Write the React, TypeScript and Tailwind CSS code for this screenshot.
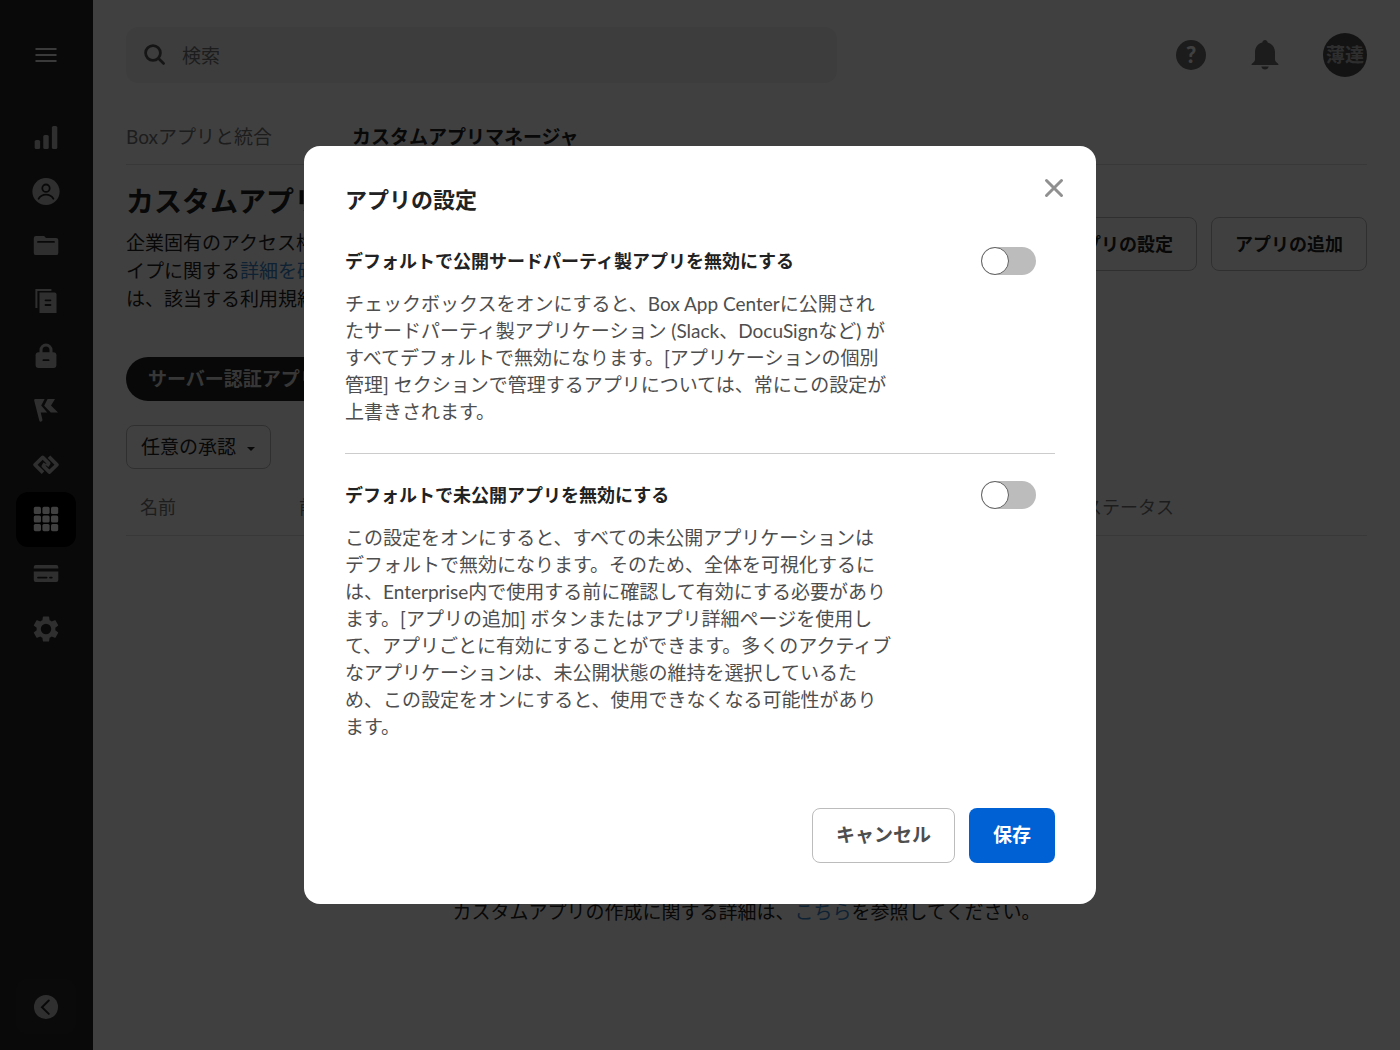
import React from "react";

const iconBox = "h-[30px] w-[30px]";

function ChartIcon() {
  return (
    <svg viewBox="0 0 30 30" className={iconBox} fill="currentColor" aria-hidden="true">
      <rect x="3.7" y="18" width="5.4" height="9" rx="1.6" />
      <rect x="12.3" y="13" width="5.4" height="14" rx="1.6" />
      <rect x="20.9" y="4" width="5.4" height="23" rx="1.6" />
    </svg>
  );
}

function UserIcon() {
  return (
    <svg viewBox="0 0 30 30" className={iconBox} aria-hidden="true">
      <circle cx="15" cy="14.500" r="13.600" fill="currentColor" />
      <circle cx="15" cy="11.200" r="3.700" fill="none" stroke="#222" strokeWidth="1.800" />
      <path d="M7.600 21.800c1.600-2.800 4.300-4.200 7.400-4.200s5.800 1.400 7.400 4.200" fill="none" stroke="#222" strokeWidth="1.800" strokeLinecap="round" />
    </svg>
  );
}

function FolderIcon() {
  return (
    <svg viewBox="0 0 30 30" className={iconBox} aria-hidden="true">
      <path d="M2.800 7.300a2.200 2.200 0 0 1 2.200-2.200h7.200c.9 0 1.300.4 1.900 1l.8.8h10.200a2.200 2.200 0 0 1 2.200 2.200v12.800a2.200 2.200 0 0 1-2.200 2.200H5a2.200 2.200 0 0 1-2.200-2.200z" fill="currentColor" />
      <path d="M7 10.900h16" stroke="#222" strokeWidth="1.800" strokeLinecap="round" />
    </svg>
  );
}

function DocsIcon() {
  return (
    <svg viewBox="0 0 30 30" className={iconBox} aria-hidden="true">
      <path d="M5.400 22V3.900h15" fill="none" stroke="currentColor" strokeWidth="2" />
      <path d="M8.500 6.500h15a2 2 0 0 1 2 2V27h-17z" fill="currentColor" />
      <path d="M14.500 14.300h5M14.500 19h5" stroke="#222" strokeWidth="1.800" strokeLinecap="round" />
    </svg>
  );
}

function LockIcon() {
  return (
    <svg viewBox="0 0 30 30" className={iconBox} aria-hidden="true">
      <path d="M10 13V9a5 5 0 0 1 10 0v4" fill="none" stroke="currentColor" strokeWidth="3" />
      <rect x="4.600" y="11.200" width="20.800" height="15.800" rx="3" fill="currentColor" />
      <path d="M12.400 19.200h5.200" stroke="#222" strokeWidth="1.800" strokeLinecap="round" />
    </svg>
  );
}

function FlagIcon() {
  return (
    <svg viewBox="0 0 30 30" className={iconBox} fill="currentColor" aria-hidden="true">
      <path d="M4.200 4h9.400l-3.400 6.600 6 7H9.700l1.700 7a1.600 1.600 0 0 1-3.100.800L3.200 5.400A1.100 1.100 0 0 1 4.200 4z" />
      <path d="M16.600 4h7.400l-4 6.400 7 7.200h-7.200l-6.600-6.800z" />
    </svg>
  );
}

function IntegrationIcon() {
  return (
    <svg viewBox="0 0 30 30" className={iconBox} fill="none" stroke="currentColor" strokeWidth="3.600" strokeLinejoin="round" aria-hidden="true">
      <path d="M12 22.600 4 14.700l7.700-7.400 6 6-1.700 2.700" />
      <path d="m18 6.800 8 7.900-7.700 7.400-6-6 1.700-2.700" />
    </svg>
  );
}

function AppsIcon() {
  return (
    <svg viewBox="0 0 30 30" className={iconBox} fill="currentColor" aria-hidden="true">
      {[2.8, 11.4, 20].map((y) =>
        [2.8, 11.4, 20].map((x) => <rect key={`${x}-${y}`} x={x} y={y} width="7.200" height="7.200" rx="1.600" />)
      )}
    </svg>
  );
}

function CardIcon() {
  return (
    <svg viewBox="0 0 30 30" className={iconBox} aria-hidden="true">
      <path d="M2.800 9.600V8a2 2 0 0 1 2-2h20.500a2 2 0 0 1 2 2v1.600zM2.800 12.600h24.500V21a2 2 0 0 1-2 2H4.800a2 2 0 0 1-2-2z" fill="currentColor" />
      <path d="M7 18.600h8.600M19 18.600h1.800" stroke="#222" strokeWidth="1.800" strokeLinecap="round" />
    </svg>
  );
}

function GearIcon() {
  return (
    <svg viewBox="0 0 24 24" className={iconBox} fill="currentColor" aria-hidden="true">
      <path d="M19.430 12.980c.04-.32.07-.64.07-.98s-.03-.66-.07-.98l2.110-1.650c.19-.15.24-.42.12-.64l-2-3.460c-.12-.22-.39-.3-.61-.22l-2.490 1c-.52-.4-1.080-.73-1.690-.98l-.38-2.650A.488.488 0 0 0 14 2h-4c-.25 0-.46.18-.49.42l-.38 2.650c-.61.25-1.170.59-1.690.98l-2.490-1c-.23-.09-.49 0-.61.22l-2 3.460c-.13.22-.07.49.12.64l2.110 1.650c-.04.32-.07.65-.07.98s.03.66.07.98l-2.110 1.650c-.19.15-.24.42-.12.64l2 3.460c.12.22.39.3.61.22l2.490-1c.52.4 1.080.73 1.690.98l.38 2.650c.03.24.24.42.49.42h4c.25 0 .46-.18.49-.42l.38-2.650c.61-.25 1.170-.59 1.690-.98l2.490 1c.23.09.49 0 .61-.22l2-3.460c.12-.22.07-.49-.12-.64zM12 16.200a4.200 4.200 0 1 1 0-8.400 4.200 4.200 0 0 1 0 8.400z" />
    </svg>
  );
}

const navItems = [
  { label: "インサイト", icon: <ChartIcon /> },
  { label: "ユーザーとグループ", icon: <UserIcon /> },
  { label: "コンテンツ", icon: <FolderIcon /> },
  { label: "レポート", icon: <DocsIcon /> },
  { label: "セキュリティ", icon: <LockIcon /> },
  { label: "ガバナンス", icon: <FlagIcon /> },
  { label: "自動化", icon: <IntegrationIcon /> },
  { label: "アプリ", icon: <AppsIcon />, active: true },
  { label: "請求", icon: <CardIcon /> },
  { label: "設定", icon: <GearIcon /> },
];

function Sidebar() {
  return (
    <aside className="flex w-[93px] shrink-0 flex-col items-center bg-[#262626] pb-4 pr-px pt-7 text-[#bcbcbc]">
      <button type="button" aria-label="メニュー" className="flex h-[54px] w-[60px] items-center justify-center text-[#e8e8e8]">
        <svg viewBox="0 0 22 16" className="h-4 w-[22px]" aria-hidden="true">
          <path d="M0.500 2h21M0.500 8h21M0.500 14h21" stroke="currentColor" strokeWidth="2" />
        </svg>
      </button>
      <nav className="mt-7 flex h-[546px] flex-col">
        {navItems.map((item) => (
          <a
            key={item.label}
            href="#"
            aria-label={item.label}
            aria-current={item.active ? "page" : undefined}
            className={
              item.active
                ? "flex h-[55px] w-[60px] items-center justify-center rounded-xl bg-black text-white"
                : "flex h-[55px] w-[60px] items-center justify-center rounded-xl"
            }
          >
            {item.icon}
          </a>
        ))}
      </nav>
      <button type="button" aria-label="折りたたむ" className="mt-auto flex h-[55px] w-[60px] items-center justify-center rounded-xl bg-[#2b2b2b]">
        <svg viewBox="0 0 24 24" className="h-6 w-6" aria-hidden="true">
          <circle cx="12" cy="12" r="12" fill="currentColor" />
          <path d="m14.800 5.500-6.800 6.700 6.800 6.700" fill="none" stroke="#222" strokeWidth="2" strokeLinecap="round" />
        </svg>
      </button>
    </aside>
  );
}

function Header() {
  return (
    <header className="flex h-14 items-center justify-between">
      <label className="flex h-14 w-full max-w-[711px] items-center gap-4 rounded-xl bg-[#f4f4f4] pl-[18px] pr-4 text-[#555]">
        <svg viewBox="0 0 22 22" className="h-[22px] w-[22px] shrink-0" fill="none" stroke="currentColor" strokeWidth="2.800" strokeLinecap="round" aria-hidden="true">
          <circle cx="9" cy="9" r="7.400" />
          <path d="m14.800 14.800 4.800 4.600" />
        </svg>
        <input type="search" aria-label="検索" placeholder="検索" className="w-full bg-transparent pt-0.5 text-[19px] outline-none placeholder:text-[#767676]" />
      </label>
      <div className="flex items-center text-[#6f6f6f]">
        <button type="button" aria-label="ヘルプ" className="flex h-[30px] w-[30px] items-center justify-center rounded-full bg-[#6f6f6f] text-[22px] font-black leading-none text-white">
          ?
        </button>
        <button type="button" aria-label="通知" className="ml-[43px]">
          <svg viewBox="0 0 32 32" className="h-8 w-8" fill="currentColor" aria-hidden="true">
            <path d="M13.300 3.500C13.500 2 14.600 1 16 1s2.500 1 2.700 2.500C23.300 4.700 26 8.400 26 13v7.200c0 1.600.8 2.700 2 3.500.9.600 1.500 1.300 1.500 2.300H2.500c0-1 .6-1.700 1.500-2.300 1.200-.8 2-1.900 2-3.500V13c0-4.600 2.700-8.300 7.300-9.500zM12.300 27.600h7.400a3.800 3.800 0 0 1-7.400 0z" />
          </svg>
        </button>
        <button type="button" className="ml-[42px] h-11 w-11 whitespace-nowrap rounded-full bg-[#4e4e4e] text-center text-[19px] font-bold text-[#b8b8b8]">
          <span className="flex justify-center">薄達</span>
        </button>
      </div>
    </header>
  );
}

function AppManager() {
  return (
    <main className="flex min-w-0 flex-1 flex-col px-[33px] pt-[27px]">
      <Header />
      <nav className="mt-7 flex h-[54px] gap-20 border-b border-[#e0e0e0] pt-3 text-[19px] leading-7">
        <a href="#" className="text-[#767676]">Boxアプリと統合</a>
        <a href="#" aria-current="page" className="font-bold text-[#222]">カスタムアプリマネージャ</a>
      </nav>
      <section className="mt-4 flex items-start justify-between">
        <div className="w-[640px]">
          <h1 className="text-[28px] font-bold leading-10 text-[#222]">カスタムアプリマネージャ</h1>
          <p className="mt-2 text-[19px] leading-7 text-[#222]">
            企業固有のアクセス権限を持つアプリを管理します。アプリタ
            <br />
            イプに関する<a href="#" className="text-[#3c86cc]">詳細を確認</a>してください。アプリの使用に際して
            <br />
            は、該当する利用規約が適用されます。
          </p>
        </div>
        <div className="mt-9 flex gap-[14px] text-[18px] font-bold text-[#222]">
          <button type="button" className="h-[54px] rounded-lg border border-[#bcbcbc] px-[23px]">アプリの設定</button>
          <button type="button" className="h-[54px] rounded-lg border border-[#bcbcbc] px-[23px]">アプリの追加</button>
        </div>
      </section>
      <button type="button" className="mt-[44px] h-11 self-start rounded-full bg-[#222] px-[22px] text-[19px] font-bold text-[#dcdcdc]">
        サーバー認証アプリ
      </button>
      <div className="relative mt-6 w-[145px] text-[#222]">
        <select aria-label="承認" className="h-[44px] w-full appearance-none rounded-lg border border-[#bcbcbc] bg-transparent pl-[14px] text-[19px]">
          <option>任意の承認</option>
        </select>
        <svg viewBox="0 0 8 4" className="pointer-events-none absolute right-4 top-[22px] h-1 w-2" fill="currentColor" aria-hidden="true">
          <path d="M0 0h8L4 4z" />
        </svg>
      </div>
      <table className="mt-[11px] w-full table-fixed border-b border-[#e0e0e0] text-left text-[18px] text-[#767676]">
        <thead>
          <tr className="h-[55px]">
            <th scope="col" className="w-[159px] pl-[14px] font-normal">名前</th>
            <th scope="col" className="pl-[14px] font-normal">前回の更新</th>
            <th scope="col" className="w-[283px] font-normal">ステータス</th>
          </tr>
        </thead>
      </table>
      <p className="mt-auto pb-[124px] text-center text-[19px] leading-7 text-[#222]">
        カスタムアプリの作成に関する詳細は、<a href="#" className="text-[#3c86cc]">こちら</a>を参照してください。
      </p>
    </main>
  );
}

type SettingProps = { id: string; title: string; lines: string[] };

function Setting({ id, title, lines }: SettingProps) {
  return (
    <section>
      <div className="flex h-7 items-center justify-between pr-[19px]">
        <label htmlFor={id} className="text-[18px] font-bold text-[#222]">{title}</label>
        <span className="relative flex h-7 w-[55px]">
          <input id={id} type="checkbox" role="switch" aria-describedby={`${id}-text`} className="peer h-7 w-[55px] appearance-none rounded-full bg-[#bcbcbc] checked:bg-[#0061d5]" />
          <span className="pointer-events-none absolute left-0 top-0 h-7 w-7 rounded-full border border-[#606060] bg-white peer-checked:left-[27px]" />
        </span>
      </div>
      <p id={`${id}-text`} className="mt-[15px] text-[19px] leading-[27px] text-[#4e4e4e]">
        {lines.map((line) => (
          <span key={line} className="block">{line}</span>
        ))}
      </p>
    </section>
  );
}

function SettingsDialog() {
  return (
    <div className="fixed inset-0 flex items-center justify-center bg-black/75">
      <div role="dialog" aria-modal="true" aria-labelledby="dialog-title" className="w-full max-w-[792px] rounded-2xl bg-white px-[41px] pb-[41px] pt-[37px]">
        <div className="flex h-8 items-center justify-between">
          <h2 id="dialog-title" className="text-[22px] font-bold text-[#222]">アプリの設定</h2>
          <button type="button" aria-label="閉じる" className="-mr-[14px] -mt-[22px] p-[5px] text-[#909090]">
            <svg viewBox="0 0 20 20" className="h-5 w-5" fill="none" stroke="currentColor" strokeWidth="3" strokeLinecap="round" aria-hidden="true">
              <path d="m2.500 2.500 15 15M17.500 2.500l-15 15" />
            </svg>
          </button>
        </div>
        <div className="mt-8">
          <Setting
            id="published"
            title="デフォルトで公開サードパーティ製アプリを無効にする"
            lines={[
              "チェックボックスをオンにすると、Box App Centerに公開され",
              "たサードパーティ製アプリケーション (Slack、DocuSignなど) が",
              "すべてデフォルトで無効になります。[アプリケーションの個別",
              "管理] セクションで管理するアプリについては、常にこの設定が",
              "上書きされます。",
            ]}
          />
          <hr className="mb-[27px] mt-7 border-[#cccccc]" />
          <Setting
            id="unpublished"
            title="デフォルトで未公開アプリを無効にする"
            lines={[
              "この設定をオンにすると、すべての未公開アプリケーションは",
              "デフォルトで無効になります。そのため、全体を可視化するに",
              "は、Enterprise内で使用する前に確認して有効にする必要があり",
              "ます。[アプリの追加] ボタンまたはアプリ詳細ページを使用し",
              "て、アプリごとに有効にすることができます。多くのアクティブ",
              "なアプリケーションは、未公開状態の維持を選択しているた",
              "め、この設定をオンにすると、使用できなくなる可能性があり",
              "ます。",
            ]}
          />
        </div>
        <div className="mt-[68px] flex justify-end gap-[14px] text-[19px] font-bold">
          <button type="button" className="h-[55px] rounded-lg border border-[#bcbcbc] px-[23px] text-[#4e4e4e]">キャンセル</button>
          <button type="button" className="h-[55px] rounded-lg bg-[#0061d5] px-[24px] text-white">保存</button>
        </div>
      </div>
    </div>
  );
}

export default function App() {
  return (
    <div lang="ja" className="flex min-h-screen bg-white font-[Lato,'Noto_Sans_CJK_JP',sans-serif]">
      <Sidebar />
      <AppManager />
      <SettingsDialog />
    </div>
  );
}
